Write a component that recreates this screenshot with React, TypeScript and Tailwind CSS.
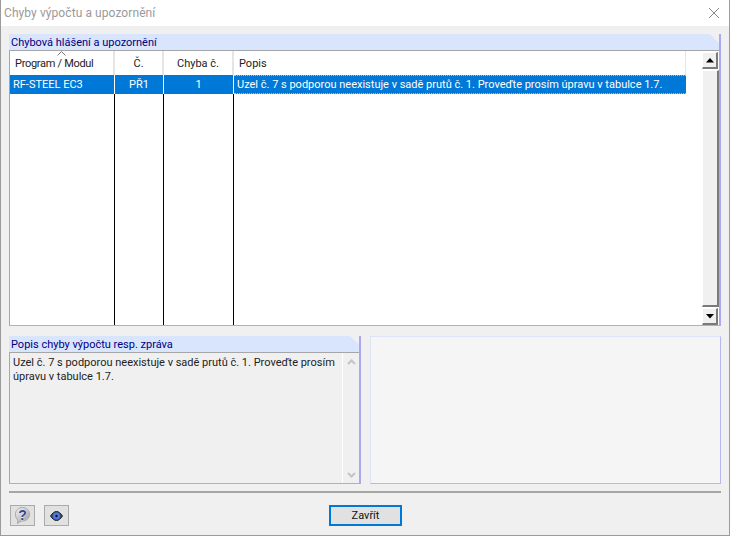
const FONT = "font-['Roboto','Liberation_Sans',sans-serif]";

const columns = [
  { label: "Program / Modul", value: "RF-STEEL EC3", width: "w-[105px]", left: true },
  { label: "Č.", value: "PŘ1", width: "w-[49px]", left: false },
  { label: "Chyba č.", value: "1", width: "w-[70px]", left: false },
];

const message = "Uzel č. 7 s podporou neexistuje v sadě prutů č. 1. Proveďte prosím úpravu v tabulce 1.7.";

function SectionTitle({ children }: { children: React.ReactNode }) {
  return (
    <div className="flex h-[16px] shrink-0 items-center bg-[#d9e4fd] pt-[2px] pl-[2px] text-[11px] text-[#000080] [clip-path:polygon(0_0,calc(100%-9px)_0,100%_9px,100%_100%,0_100%)]">
      {children}
    </div>
  );
}

function ScrollButton({ down }: { down?: boolean }) {
  return (
    <div className="flex h-[17px] w-[16px] items-center justify-center border-t border-r-2 border-b-2 border-l border-t-white border-r-[#7a7a7a] border-b-[#7a7a7a] border-l-white bg-[#f0f0f0]">
      <svg width="8" height="5" viewBox="0 0 8 5">
        <path d={down ? "M0 0h8L4 4.500z" : "M4 0l4 4.500H0z"} fill="#000" />
      </svg>
    </div>
  );
}

function ErrorTable() {
  return (
    <div className="flex min-h-0 flex-1 border-t border-l border-t-[#a6a6a6] border-l-[#a6a6a6] bg-white">
      {columns.map((col) => (
        <div key={col.label} className={`flex ${col.width} shrink-0 flex-col`}>
          <div className={`relative flex h-[24px] shrink-0 items-center border-r-2 border-r-[#e5e5e5] pt-[2px] text-[11px] text-[#222] ${col.left ? "pl-[5px] tracking-[-0.3px]" : "justify-center"}`}>
            {col.label}
            {col.left && (
              <svg className="absolute top-[0px] left-[47px]" width="9" height="5" viewBox="0 0 9 5">
                <path d="M0.500 4.500L4.500 0.500L8.500 4.500" fill="none" stroke="#777" />
              </svg>
            )}
          </div>
          <div className={`flex h-[19px] shrink-0 items-center border-r border-r-white bg-[#0078d7] pt-[1px] text-[11px] text-white ${col.left ? "pl-[3px]" : "justify-center"}`}>
            {col.value}
          </div>
          <div className="flex-1 border-r border-r-black" />
        </div>
      ))}
      <div className="flex w-[452px] shrink-0 flex-col">
        <div className="flex h-[24px] shrink-0 items-center border-r border-r-[#e5e5e5] pt-[2px] pl-[5px] text-[11px] text-[#222]">Popis</div>
        <div className="flex h-[19px] shrink-0 items-center border-y border-dotted border-y-[#9fc4e8] bg-[#0078d7] pt-[1px] pl-[3px] text-[11px] whitespace-nowrap text-white">{message}</div>
      </div>
      <div className="flex-1" />
      <div className="flex w-[17px] shrink-0 flex-col pt-[1px]">
        <ScrollButton />
        <div className="my-[1px] flex-1 border-t border-r-2 border-b-2 border-l border-t-white border-r-[#7a7a7a] border-b-[#7a7a7a] border-l-white bg-[#f0f0f0]" />
        <ScrollButton down />
      </div>
    </div>
  );
}

function MessageBox() {
  return (
    <div className="flex min-h-0 flex-1 border-t border-l border-t-[#a6a6a6] border-l-[#a6a6a6] bg-[#f0f0f0]">
      <div className="flex-1 pt-[3px] pl-[3px] text-[11px] leading-[14px] whitespace-nowrap text-[#222]">
        Uzel č. 7 s podporou neexistuje v sadě prutů č. 1. Proveďte prosím
        <br />
        úpravu v tabulce 1.7.
      </div>
      <div className="flex w-[17px] shrink-0 flex-col items-center justify-between border-l border-l-white pt-[6px] pb-[5px]">
        <svg width="9" height="6" viewBox="0 0 9 6"><path d="M1 5l3.500-3.500L8 5" fill="none" stroke="#c4c4c4" strokeWidth="2" /></svg>
        <svg width="9" height="6" viewBox="0 0 9 6"><path d="M1 1l3.500 3.500L8 1" fill="none" stroke="#c4c4c4" strokeWidth="2" /></svg>
      </div>
    </div>
  );
}

function HelpIcon() {
  return (
    <svg width="17" height="17" viewBox="0 0 17 17">
      <defs>
        <linearGradient id="bubble" x1="0" y1="0" x2="1" y2="1">
          <stop offset="0" stopColor="#f4f4f4" />
          <stop offset="1" stopColor="#9c9c9c" />
        </linearGradient>
      </defs>
      <path d="M8.500 0.500c4 0 7 2.800 7 6.700s-3 6.800-7 6.800H7L3.500 16.500l.4-3.500C2.200 11.700 1.500 9.500 1.500 7.200c0-3.900 3-6.700 7-6.700z" fill="url(#bubble)" stroke="#a8a8a8" />
      <text x="8.500" y="12.500" textAnchor="middle" fontSize="14" fontWeight="700" fill="#37478f" stroke="#fff" strokeWidth="0.400" paintOrder="stroke" fontFamily="Liberation Sans, sans-serif">?</text>
    </svg>
  );
}

function EyeIcon() {
  return (
    <svg width="13" height="10" viewBox="0 0 13 10">
      <path d="M0.500 5C2.500 2 4.500 0.500 6.500 0.500S10.500 2 12.500 5C10.500 8 8.500 9.500 6.500 9.500S2.500 8 0.500 5z" fill="#3c4a70" stroke="#222" />
      <circle cx="6.500" cy="5" r="3.500" fill="#4d7be6" />
      <circle cx="6.500" cy="5" r="1.200" fill="#0a0a30" />
    </svg>
  );
}

function IconButton({ children }: { children: React.ReactNode }) {
  return <button type="button" className="flex h-[21px] w-[25px] items-center justify-center border border-[#ababab] bg-[#e1e1e1]">{children}</button>;
}

export default function App() {
  return (
    <div className={`${FONT} flex h-[536px] w-[730px] flex-col overflow-hidden border-x border-b border-x-[#9b9b9b] border-b-[#9b9b9b] bg-[#f0f0f0]`}>
      <div className="flex h-[26px] shrink-0 items-center justify-between bg-white pr-[9px] pl-[3px] text-[12px] tracking-[0.08px] text-[#9a9a9a]">
        <span>Chyby výpočtu a upozornění</span>
        <svg width="12" height="12" viewBox="0 0 12 12"><path d="M1 1l10 10M11 1L1 11" stroke="#8a8a8a" strokeWidth="1" fill="none" /></svg>
      </div>

      <div className="flex flex-1 flex-col px-[8px] pt-[8px]">
        <section className="flex h-[292px] shrink-0 flex-col border-r-2 border-b border-r-[#a9a9f0] border-b-[#a9a9f0]">
          <SectionTitle>Chybová hlášení a upozornění</SectionTitle>
          <ErrorTable />
        </section>

        <div className="mt-[10px] flex h-[148px] shrink-0 gap-[9px]">
          <section className="flex w-[352px] shrink-0 flex-col border-r-2 border-b border-r-[#a9a9f0] border-b-[#a9a9f0]">
            <SectionTitle>Popis chyby výpočtu resp. zpráva</SectionTitle>
            <MessageBox />
          </section>
          <div className="flex-1 border-t border-r border-b border-l border-t-[#dfe3f8] border-r-[#b8b8f0] border-b-[#b8b8f0] border-l-[#dfe3f8] bg-[#f5f5f5]" />
        </div>

        <div className="mt-[7px] h-[2px] shrink-0 bg-[#a6a6a6]" />

        <div className="relative mt-[12px] flex h-[21px] shrink-0 items-center justify-center pl-[1px]">
          <div className="absolute left-[1px] flex gap-[9px]">
            <IconButton><HelpIcon /></IconButton>
            <IconButton><EyeIcon /></IconButton>
          </div>
          <button type="button" className="h-[21px] w-[73px] border-2 border-[#0078d7] bg-[#e1e1e1] pt-[1px] text-[11px] text-[#111]">Zavřít</button>
        </div>
      </div>
    </div>
  );
}
